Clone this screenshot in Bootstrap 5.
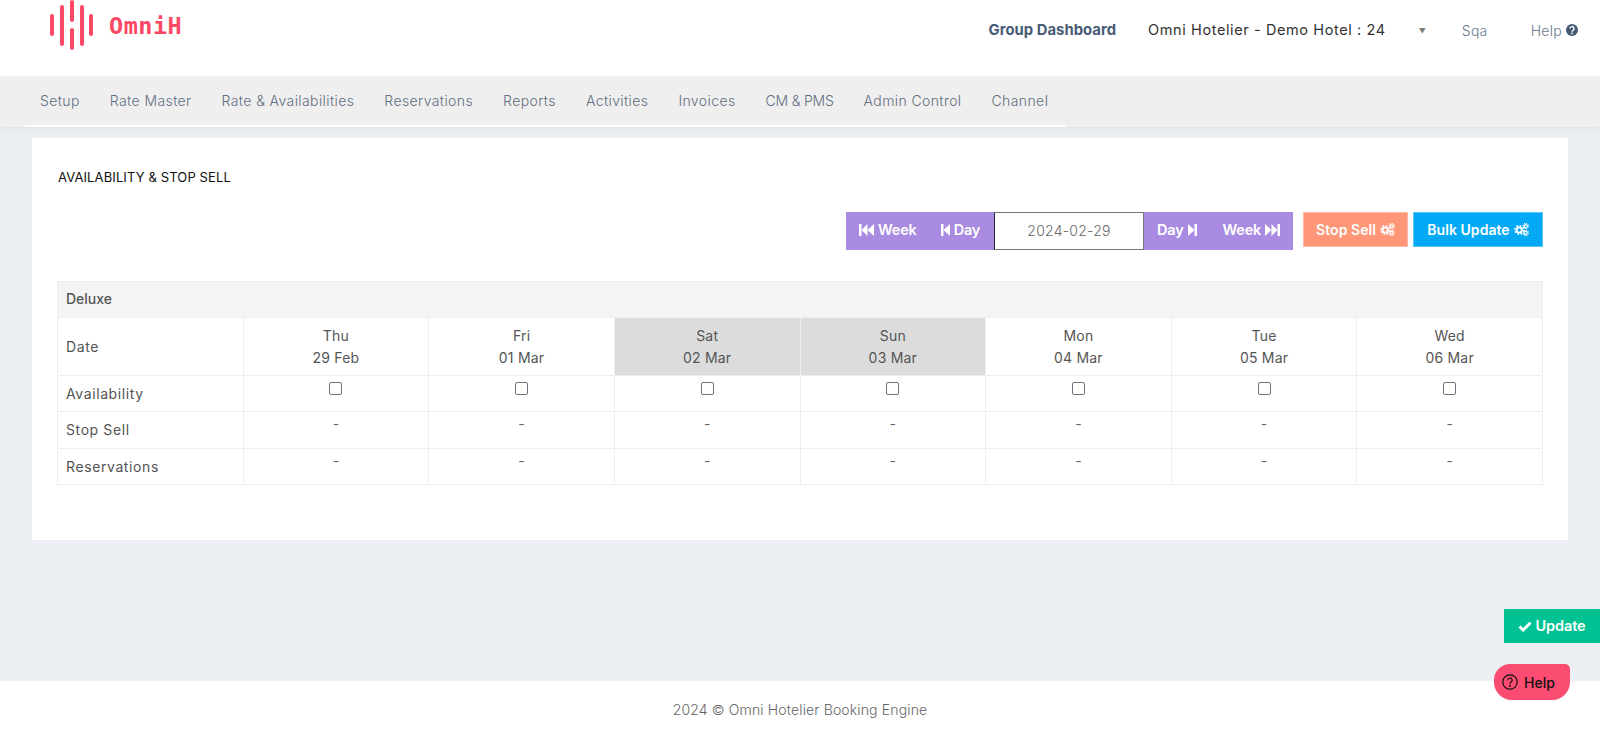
<!doctype html>
<html lang="en"><head><meta charset="utf-8"><title>Availability</title>
<link href="https://cdn.jsdelivr.net/npm/bootstrap@5.3.0/dist/css/bootstrap.min.css" rel="stylesheet">
<style>
html,body{height:733px;overflow:hidden}
body{font-family:Inter,"Open Sans",sans-serif;background:#ecf0f4;color:#4a4a4a;font-size:14px}
.shell{height:733px;position:relative}
.topbar{height:76px;background:#fff;padding-left:49px;padding-right:22px}
.logo-word{font-family:"DejaVu Sans Mono","Liberation Mono",monospace;font-weight:700;font-size:23.5px;color:#fb4865;letter-spacing:.5px;margin-left:15px;margin-top:-22px}
.logo-mark{margin-top:-26px}
.toplink{color:#6c7a8d;font-size:14px;font-weight:300;letter-spacing:.3px}
.group-link{color:#475b75;font-size:14.8px;font-weight:700;letter-spacing:.05px;margin-right:32px}
.hotel-name{color:#333;font-size:14.5px;margin-right:33px;letter-spacing:.6px}
.caret-mark{color:#7b7b7b;font-size:7px;margin-right:36px;margin-top:4px}
.gap-sqa{margin-right:43px}
.topbar-right{margin-top:-16px}
.menubar{height:51px;background:#efefef;box-shadow:0 2px 6px rgba(120,130,150,.12)}
.menu-inner{width:1041px;margin-left:25px;height:51px;border-bottom:2px solid #fff;padding-left:15px;gap:30px}
.menu-inner a{color:#5f6e82;font-size:14px;font-weight:300;text-decoration:none;letter-spacing:.4px;padding-bottom:1px}
.menu-inner a.tight{letter-spacing:-.2px}
.sheet{background:#fff;margin:11px 32px 0;height:402px;padding:31px 25px 0}
.sheet-title{color:#111;font-size:13px;font-weight:400;margin:0;padding-left:1px;line-height:16px;letter-spacing:.12px}
.tools{margin-top:27px;height:38px;align-items:flex-start}
.purple{background:#a98be2;height:38px;color:#fff;font-weight:600;font-size:14.5px;letter-spacing:-.2px;align-items:center;display:flex;padding-bottom:3px}
.purple span{display:inline-flex;align-items:center;gap:4px}
.back-group{width:148px;padding-left:13px;gap:24px}
.next-group{width:149px;padding-left:13px;gap:26px}
.date-box{width:150px;height:38px;border:1px solid #777;border-left-color:#223;background:#fff;color:#666;font-size:14px;font-weight:300;text-align:center;line-height:36px;letter-spacing:.25px}
.act{height:35px;color:#fff;font-size:14px;font-weight:600;display:flex;align-items:center;justify-content:center;gap:4px;letter-spacing:.05px;border:1px solid #ffffff55;padding-bottom:1px}
.act-stop{background:#ff9678;width:105px;margin-left:10px}
.act-bulk{background:#03a9f4;width:130px;margin-left:5px}
.grid-table{table-layout:fixed;width:1486px;margin:31px 0 0;border-color:#eceef0;color:#555;font-size:14px}
.grid-table>tbody>tr>*{padding:0 8px;border-color:#eceef0;line-height:22px;color:#555;font-weight:400}
.grid-table>tbody>tr>th.room{background:#f4f4f4;height:36px;font-weight:500;vertical-align:middle;padding-bottom:2px}
.grid-table>tbody>tr>.first-col{width:186px;vertical-align:middle;letter-spacing:.6px}
.grid-table .day{text-align:center;vertical-align:middle;height:58px;letter-spacing:.2px}
.grid-table>tbody>tr>.wk{background:#dcdcdc}
.grid-table>tbody>tr>.mid{text-align:center;vertical-align:top;height:36px;padding-top:2px}
.grid-table .rowtall{height:37px}
.grid-table .mid .dash{line-height:20px;display:block;color:#666}
.box{width:13px;height:13px;border:1px solid #6d7280;border-radius:2px;display:inline-block;background:#fff;margin-top:4px;-webkit-appearance:none;appearance:none;vertical-align:top}
.foot{position:absolute;left:0;right:0;top:681px;height:52px;background:#fff;text-align:center;color:#666;font-size:14px;font-weight:300;line-height:22px;padding-top:18px;letter-spacing:.15px}
.update-float{position:absolute;left:1504px;top:609px;width:96px;height:34px;background:#00c292;color:#fff;font-weight:600;font-size:14.5px;display:flex;align-items:center;justify-content:center;gap:3px;letter-spacing:-.1px}
.help-float{position:absolute;left:1494px;top:664px;width:76px;height:36px;background:#fb4c72;color:#111;font-weight:500;font-size:14px;display:flex;align-items:center;gap:6px;padding-left:8px;border-radius:16px 5px 18px 18px}
</style></head>
<body>
<svg width="0" height="0" class="position-absolute">
<defs>
<symbol id="ff-l" viewBox="0 0 15 12"><path d="M0 0h2.500v12H0zM2.500 6 8.500 0v12zM8.500 6l6.500-6v12z"/></symbol>
<symbol id="st-l" viewBox="0 0 9 12"><path d="M0 0h2.500v12H0zM2.500 6 9 0v12z"/></symbol>
<symbol id="ff-r" viewBox="0 0 15 12"><path d="M15 0h-2.500v12H15zM12.500 6 6.500 0v12zM6.500 6 0 0v12z"/></symbol>
<symbol id="st-r" viewBox="0 0 9 12"><path d="M9 0H6.500v12H9zM6.500 6 0 0v12z"/></symbol>
<symbol id="cogs" viewBox="0 0 16 14">
<circle cx="5.500" cy="7.500" r="2.800" fill="none" stroke="currentColor" stroke-width="2"/><circle cx="5.500" cy="7.500" r="4.600" fill="none" stroke="currentColor" stroke-width="1.800" stroke-dasharray="1.800 1.800"/>
<circle cx="12.500" cy="3.300" r="1.600" fill="none" stroke="currentColor" stroke-width="1.300"/><circle cx="12.500" cy="3.300" r="2.800" fill="none" stroke="currentColor" stroke-width="1.200" stroke-dasharray="1.200 1"/>
<circle cx="12.500" cy="10.700" r="1.600" fill="none" stroke="currentColor" stroke-width="1.300"/><circle cx="12.500" cy="10.700" r="2.800" fill="none" stroke="currentColor" stroke-width="1.200" stroke-dasharray="1.200 1"/>
</symbol>
</defs></svg>
<div class="shell">
<header class="topbar d-flex align-items-center justify-content-between">
<div class="d-flex align-items-center">
<svg class="logo-mark" width="45" height="50" viewBox="0 0 45 50" fill="none" stroke="#fb4865" stroke-width="4" stroke-linecap="round"><path d="M3 16v18M13 7v37M23 2v18M23 30v18M33 7v37M42 16v18"/></svg>
<span class="logo-word">OmniH</span>
</div>
<div class="topbar-right d-flex align-items-center">
<span class="group-link">Group Dashboard</span>
<span class="hotel-name">Omni Hotelier - Demo Hotel : 24</span>
<span class="caret-mark">▼</span>
<span class="toplink gap-sqa">Sqa</span>
<span class="toplink d-inline-flex align-items-center gap-1">Help <svg width="12" height="12" viewBox="0 0 12 12"><circle cx="6" cy="6" r="6" fill="#475b75"/><path d="M4 4.600a2 2 0 1 1 3 1.700c-.7.4-1 .7-1 1.400" fill="none" stroke="#fff" stroke-width="1.400"/><rect x="5.200" y="8.600" width="1.600" height="1.600" fill="#fff"/></svg></span>
</div>
</header>
<nav class="menubar">
<div class="menu-inner d-flex align-items-center">
<a href="#">Setup</a><a href="#">Rate Master</a><a href="#">Rate &amp; Availabilities</a><a href="#">Reservations</a><a href="#">Reports</a><a href="#">Activities</a><a href="#">Invoices</a><a href="#" class="tight">CM &amp; PMS</a><a href="#">Admin Control</a><a href="#">Channel</a>
</div>
</nav>
<main class="sheet">
<h1 class="sheet-title">AVAILABILITY &amp; STOP SELL</h1>
<div class="tools d-flex justify-content-end">
<div class="purple back-group"><span><svg width="15" height="12" fill="#fff"><use href="#ff-l"/></svg>Week</span><span><svg width="9" height="12" fill="#fff"><use href="#st-l"/></svg>Day</span></div>
<div class="date-box">2024-02-29</div>
<div class="purple next-group"><span>Day<svg width="9" height="12" fill="#fff"><use href="#st-r"/></svg></span><span>Week<svg width="15" height="12" fill="#fff"><use href="#ff-r"/></svg></span></div>
<div class="act act-stop">Stop Sell <svg width="15" height="13" color="#fff"><use href="#cogs"/></svg></div>
<div class="act act-bulk">Bulk Update <svg width="15" height="13" color="#fff"><use href="#cogs"/></svg></div>
</div>
<table class="table table-bordered grid-table">
<tbody>
<tr><th class="room" colspan="8">Deluxe</th></tr>
<tr><td class="first-col">Date</td>
<td class="day">Thu<br>29 Feb</td><td class="day">Fri<br>01 Mar</td><td class="day wk">Sat<br>02 Mar</td><td class="day wk">Sun<br>03 Mar</td><td class="day">Mon<br>04 Mar</td><td class="day">Tue<br>05 Mar</td><td class="day">Wed<br>06 Mar</td></tr>
<tr><td class="first-col">Availability</td>
<td class="mid"><input class="box" type="checkbox" aria-label="Thu"></td><td class="mid"><input class="box" type="checkbox" aria-label="Fri"></td><td class="mid"><input class="box" type="checkbox" aria-label="Sat"></td><td class="mid"><input class="box" type="checkbox" aria-label="Sun"></td><td class="mid"><input class="box" type="checkbox" aria-label="Mon"></td><td class="mid"><input class="box" type="checkbox" aria-label="Tue"></td><td class="mid"><input class="box" type="checkbox" aria-label="Wed"></td></tr>
<tr class="rowtall"><td class="first-col">Stop Sell</td>
<td class="mid"><span class="dash">-</span></td><td class="mid"><span class="dash">-</span></td><td class="mid"><span class="dash">-</span></td><td class="mid"><span class="dash">-</span></td><td class="mid"><span class="dash">-</span></td><td class="mid"><span class="dash">-</span></td><td class="mid"><span class="dash">-</span></td></tr>
<tr><td class="first-col">Reservations</td>
<td class="mid"><span class="dash">-</span></td><td class="mid"><span class="dash">-</span></td><td class="mid"><span class="dash">-</span></td><td class="mid"><span class="dash">-</span></td><td class="mid"><span class="dash">-</span></td><td class="mid"><span class="dash">-</span></td><td class="mid"><span class="dash">-</span></td></tr>
</tbody></table>
</main>
<footer class="foot">2024 © Omni Hotelier Booking Engine</footer>
<div class="update-float"><svg width="14" height="11" viewBox="0 0 14 11" fill="none" stroke="#fff" stroke-width="3"><path d="M1.500 5.500 5.200 9 12.500 1.800"/></svg>Update</div>
<div class="help-float"><svg width="16" height="16" viewBox="0 0 16 16" fill="none" stroke="#111" stroke-width="1.200"><circle cx="8" cy="8" r="7.200"/><path d="M5.800 6.200a2.200 2.200 0 1 1 3.300 1.900c-.8.500-1.100.9-1.100 1.700"/><circle cx="8" cy="11.800" r=".4" fill="#111"/></svg>Help</div>
</div>
</body></html>
